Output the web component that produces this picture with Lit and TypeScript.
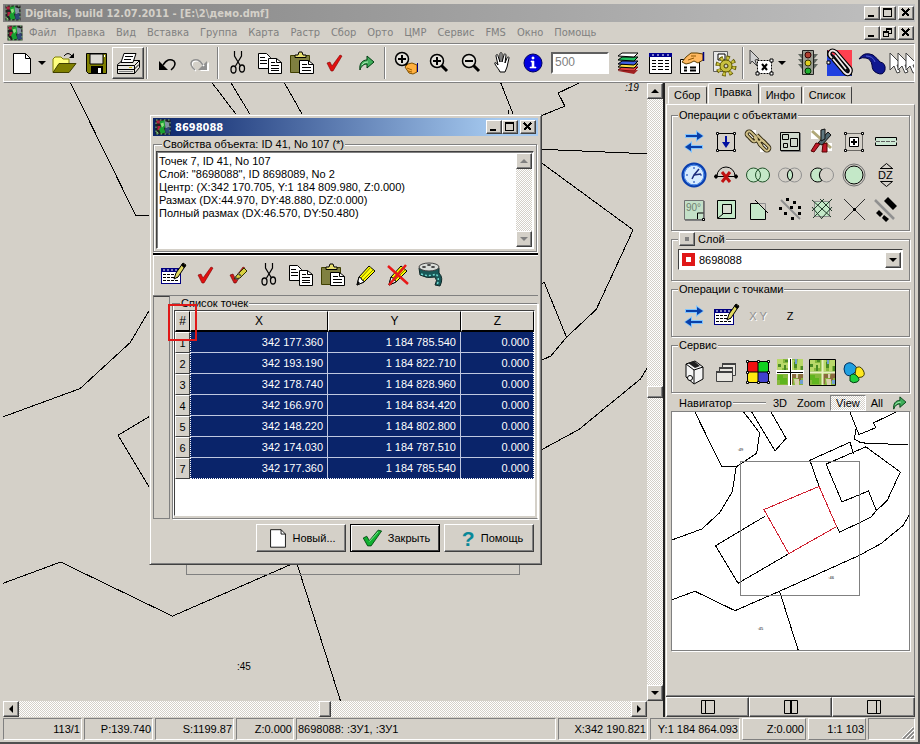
import { LitElement, html, svg, css } from "lit";
import { customElement, property } from "lit/decorators.js";
import { classMap } from "lit/directives/class-map.js";

const check = (fill: string, dark: string) => svg`
  <path d="M9 16l3-1 2 4 8-11 2 1-9 15h-2z" fill=${fill} stroke=${dark} stroke-width=".6"/>`;

const tableGrid = svg`
  <rect x="4.5" y="9.5" width="19" height="15" fill="#fff" stroke="#000080"/>
  <path d="M4 9h20v4H4z" fill="#000080"/>
  <path d="M6 11h2m2 0h2m2 0h2m2 0h2" stroke="#fff"/>
  <path d="M6 15.500h3m1 0h3m1 0h3m1 0h3M6 18.500h3m1 0h3m1 0h3m1 0h3M6 21.500h3m1 0h3m1 0h3m1 0h3" stroke="#000" stroke-width="1"/>`;

const aerial = svg`
  <path d="M3 3h26v26H3z" fill="#86b83c"/>
  <path d="M3 3h6v4h5v5H8v3H3zM17 4h3v11h-3zM24 3h5v7h-3v5h-3v-6z" fill="#b9d86a"/>
  <path d="M4 8h3v3H4zM11 4h3v2h-3zM10 9h2v6h-2zM20 6h3v6h-3zM27 10h2v5h-2z" fill="#4a8a24"/>
  <path d="M4 19h5v3h4v6H6v-4H3z" fill="#5fb51e"/>
  <path d="M17 18h5v4h-3v6h-2zM25 17h4v5h-2v3h-4z" fill="#8a6a3c"/>
  <path d="M20 23h5v6h-4zM22 18h2v4h-2z" fill="#d9cfb0"/>
  <path d="M21 3h2v5h-2zM26 24h3v4h-3z" fill="#6f9fd0"/>`;

const arrows = svg`
  <path d="M7 9h11V5l8 6-8 6v-4H7z" fill="#7fc4ff"/>
  <path d="M25 20H14v-4l-8 6 8 6v-4h11z" fill="#7fc4ff"/>
  <path d="M8 10h11V7l6 4-6 4v-3H8zM24 21H13v-3l-6 4 6 4v-3h11z" fill="#0a3fa8"/>`;

const pencil = svg`
  <path d="M8 26l2-8L20 7l6 5-11 11z" fill="#ffff00" stroke="#000"/>
  <path d="M12 19L22 8M14 21l10-10" stroke="#808000"/>
  <path d="M8 26l2-8 2 1 1 2 2 1v1z" fill="#fff" stroke="#000"/>
  <path d="M8 26l1-4 2 2z" fill="#000"/>`;

const forward = svg`
  <path d="M10 23c-1-6 2-10 7-10V9l7 6-7 6v-4c-3 0-6 2-7 6z" fill="#3fae5a" stroke="#003c10"/>
  <path d="M12 18c1-2 3-3 6-3" stroke="#b8f0c0" fill="none"/>`;

const lens = svg`
  <path d="M20 18l6 6" stroke="#000" stroke-width="3"/>
  <circle cx="16" cy="14" r="6.500" fill="#e4e2dc" stroke="#000" stroke-width="1.500"/>`;

const cursor = (x: number) => svg`
  <path d="M${x} 6v17l4-4 3 7 3-1-3-7h5z" fill="#fff" stroke="#404040"/>`;

const links = (color: string, width: number) => svg`
  <g fill="none" stroke=${color} stroke-width=${width}>
    <rect x="4" y="9" width="12" height="5" rx="2.500" transform="rotate(45 10 11)"/>
    <rect x="16" y="18" width="12" height="5" rx="2.500" transform="rotate(45 22 21)"/>
    <path d="M12 12l8 9M15 10l8 8"/>
  </g>`;

const icons: Record<string, unknown> = {
  logo: svg`
    <path d="M1 1h30v30H1z" fill="#202020"/>
    <path d="M3 3h8v6H3zM5 14h6v8H5z" fill="#b02040"/>
    <path d="M9 5l10-3 4 9-5 8 3 8-9 3-4-9 4-6z" fill="#18a030"/>
    <path d="M19 4l9 3 1 9-8 3z" fill="#8090a0"/>
    <path d="M20 19l9-3 1 12-9 2z" fill="#304878"/>
    <path d="M11 9l6-2 1 6-4 4zM3 24l5 5H3z" fill="#90e080"/>
    <path d="M2 2h28v28H2z" fill="none" stroke="#80c080" stroke-dasharray="3 5" stroke-width="2"/>`,
  page: svg`<path d="M7.500 6.500h12l5 5v15h-17z" fill="#fff" stroke="#000"/><path d="M19.500 6.500v5h5" fill="none" stroke="#000"/>`,
  open: svg`
    <path d="M5 25V12l2-2h6l2 2h6v4" fill="#ffff80" stroke="#808000"/>
    <path d="M5 25.500l6-9h17l-7 9z" fill="#808000" stroke="#404000"/>
    <path d="M16 9q4-5 8 0" fill="none" stroke="#000"/><path d="M26 6v5h-5z" fill="#000"/>`,
  save: svg`
    <path d="M6.500 6.500h20v20h-18l-2-2z" fill="#808000" stroke="#000"/>
    <path d="M10 7h13v10H10z" fill="#dcdad4" stroke="#000"/>
    <path d="M11 19h12v8H11z" fill="#000"/><path d="M18 21h3v5h-3z" fill="#fff"/><path d="M24 8h1v2h-1z" fill="#fff"/>`,
  print: svg`
    <path d="M5.500 17.500l5-4h17v7l-5 6h-17z" fill="#e8e6e0" stroke="#000"/>
    <path d="M12 6.500h12l-3 9H9z" fill="#fff" stroke="#000"/>
    <path d="M13 9.500h8M12 12.500h7M5.500 18.500h17v8M22.500 18.500l5-5M6 22.500h16l5-5" fill="none" stroke="#000"/>
    <path d="M7 24h14v1H7z" fill="#808080"/><path d="M17 20h3v1h-3z" fill="#d0c000"/>`,
  undo: svg`<path d="M8 14v9h9z" fill="#000"/><path d="M12 18q5-8 11-4 3 4-3 9" fill="none" stroke="#000" stroke-width="1.500"/>`,
  redo: svg`
    <path d="M26 15v9h-9z" fill="#fff"/><path d="M24 14v9h-9z" fill="#909090"/>
    <path d="M21 19q-5-8-11-4-3 4 3 9" fill="none" stroke="#fff" stroke-width="1.500"/>
    <path d="M20 18q-5-8-11-4-3 4 3 9" fill="none" stroke="#909090" stroke-width="1.500"/>`,
  cut: svg`
    <path d="M12.500 4v5l6 10M19.500 4v5l-6 10" fill="none" stroke="#000" stroke-width="1.200"/>
    <ellipse cx="11.500" cy="22.500" rx="2.500" ry="3.500" fill="none" stroke="#000" stroke-width="1.300"/>
    <ellipse cx="20" cy="21.500" rx="2.500" ry="3.500" fill="none" stroke="#000" stroke-width="1.300"/>`,
  copy: svg`
    <path d="M4.500 6.500h8l4 4v11h-12z" fill="#fff" stroke="#000"/>
    <path d="M6 10.500h5M6 13.500h7M6 16.500h7" stroke="#000"/>
    <path d="M14.500 11.500h8l5 4v11h-13z" fill="#fff" stroke="#000"/>
    <path d="M22.500 11.500v4h5M17 15.500h4M17 18.500h8M17 21.500h8M17 23.500h8" fill="none" stroke="#000"/>`,
  paste: svg`
    <path d="M4.500 8.500h19v17h-19z" fill="#808040" stroke="#404000"/>
    <path d="M9 10.500V8h3l1-3h3l1 3h3v2.500z" fill="#e8e070" stroke="#000"/>
    <path d="M13.500 13.500h9l5 4v9h-14z" fill="#fff" stroke="#000"/>
    <path d="M22.500 13.500v4h5M16 17.500h5M16 20.500h9M16 23.500h9" fill="none" stroke="#000"/>`,
  check: check("#e01010", "#800000"),
  forward,
  zoomhand: svg`
    <path d="M17 17l4 4" stroke="#000" stroke-width="3"/>
    <circle cx="13" cy="12" r="6.500" fill="#e4e2dc" stroke="#000" stroke-width="1.500"/>
    <path d="M9 12h8M13 8v8" stroke="#000" stroke-width="2"/>
    <path d="M16 20l3-3 4-1 5 2v7l-4 2-4-1z" fill="#ffb040" stroke="#805000"/>
    <path d="M18 21l5 2M19 24l4 1" stroke="#a06000"/><path d="M28.500 16v9" stroke="#000080"/>`,
  zoomin: svg`${lens}<path d="M12 14h8M16 10v8" stroke="#000" stroke-width="2"/>`,
  zoomout: svg`${lens}<path d="M12 14h8" stroke="#000" stroke-width="2"/>`,
  hand: svg`<path d="M15 25c-1-3-3-4-5-8-1-2 1-2 3 1L11 9c0-2 2-2 2 0l2 6V7c0-2 2-2 2 0v8l2-7c0-2 2-1 2 0l-1 8 2-5c1-2 2-1 2 0l-2 9-2 5z" fill="#fff" stroke="#000"/>`,
  info: svg`<circle cx="16" cy="16" r="9" fill="#0000e0" stroke="#000060"/><path d="M14 14h3v6h2v1h-6v-1h2v-5h-1zM15 10h2v2h-2z" fill="#fff" stroke="#fff" stroke-width=".6"/>`,
  layers: svg`
    <path d="M6 23l4-3h16l-4 4z" fill="#e04040" stroke="#600"/><path d="M6 24l16 3 4-4" fill="#a02020"/>
    <path d="M6 20l4-3h16l-4 4z" fill="#ffe040" stroke="#000"/>
    <path d="M6 17l4-3h16l-4 4z" fill="#4060e0" stroke="#000"/>
    <path d="M6 13l4-3h16l-4 4z" fill="#20c060" stroke="#000"/>
    <path d="M6 9l4-3h16l-4 4z" fill="#fff" stroke="#000"/>`,
  table: svg`
    <path d="M5.500 6.500h22v20h-22z" fill="#fff" stroke="#000"/><path d="M5 6h23v4H5z" fill="#000090"/>
    <path d="M8 8h2m3 0h2m3 0h2m3 0h2" stroke="#fff"/>
    <path d="M8 13.500h4m2 0h5m2 0h4M8 16.500h4m2 0h5m2 0h4M8 19.500h4m2 0h5m2 0h4M8 22.500h4m2 0h5m2 0h4" stroke="#000"/>`,
  form: svg`
    <path d="M4.500 12.500h19v14h-19z" fill="#fff" stroke="#000"/>
    <path d="M8 20.500h3m3 0h6M8 23.500h3m3 0h6" stroke="#000" stroke-width="2"/>
    <path d="M6 15l4-5 5-4h6l6 1v6l-5 3-4-2-4 2-4 1z" fill="#ffb860" stroke="#604000"/>
    <path d="M12 13l6-2M15 9h5" stroke="#905800"/><path d="M27.500 5v9" stroke="#000080" stroke-width="1.500"/>`,
  gear: svg`
    <path d="M5.500 4.500h14v20h-14z" fill="#e8e8e8" stroke="#606060"/><path d="M10 7h7v6h-7z" fill="#fff" stroke="#000"/>
    <circle cx="18" cy="19" r="8" fill="none" stroke="#605800" stroke-width="5" stroke-dasharray="3.300 2.980"/>
    <circle cx="18" cy="19" r="8" fill="none" stroke="#c8c040" stroke-width="3" stroke-dasharray="2.300 3.980" stroke-dashoffset="-.5"/>
    <circle cx="18" cy="19" r="6" fill="#c8c040" stroke="#605800"/><circle cx="18" cy="19" r="2" fill="#d4d0c8" stroke="#403800"/>`,
  select: svg`
    <path d="M11.500 13.500h14v13h-14z" fill="#fff" stroke="#000" stroke-dasharray="2 1"/>
    <path d="M10 25h3v3h-3zM24 12h3v3h-3zM24 25h3v3h-3z" fill="#fff" stroke="#000"/>
    <path d="M16 17l5 6M21 17l-5 6" stroke="#000" stroke-width="2"/>
    <path d="M4 3l9 9-4 1 2 6-5-5-2 3z" fill="#d0d0d0" stroke="#404040"/>`,
  lights: svg`
    <path d="M6 7h20l-4 5h4l-4 5h4l-4 5h-12l-4-5h4l-4-5h4z" fill="#606860"/>
    <path d="M10.500 3.500h11v24h-11z" fill="#989c90" stroke="#202020"/>
    <circle cx="16" cy="8" r="3" fill="#b04030" stroke="#300"/><circle cx="16" cy="16" r="3" fill="#e0d020" stroke="#330"/><circle cx="16" cy="24" r="3" fill="#20b030" stroke="#030"/>`,
  clip: svg`
    <path d="M3 3h25v26H3z" fill="#2040e0"/><path d="M3 3h25v20z" fill="#ff4050"/><path d="M3 3l25 20v6L3 9z" fill="#101010"/>
    <path d="M9 12l11 13q4 4 6 1t-1-6L12 5Q8 2 6 5t2 6" fill="none" stroke="#000" stroke-width="4"/>
    <path d="M11 8l11 14" stroke="#000" stroke-width="3"/>
    <path d="M9 12l11 13q4 4 6 1t-1-6L12 5Q8 2 6 5t2 6M11 8l11 14" fill="none" stroke="#f0e8e8" stroke-width="1.800"/>
    <path d="M3 14h3v3H3z" fill="#fff" stroke="#000"/>`,
  blob: svg`<path d="M3 12Q8 4 17 8q5 4 7 7 6 1 5 8-2 6-8 3-5-2-5-8-1-6-6-7-4-1-7 1z" fill="#101890" stroke="#000040"/><path d="M10 9q7 0 9 6" stroke="#5060d0" fill="none"/>`,
  cursors: svg`${cursor(2)}${cursor(10)}${cursor(18)}`,
  edit: svg`${tableGrid}<path d="M17 20l2-6 7-10 3 2-8 12z" fill="#e0d860" stroke="#000"/><path d="M25 5l3 3" stroke="#000" stroke-width="3"/>`,
  checkpen: svg`${check("#d01818", "#600")}<path d="M13 20l3-4 7-7 3 3-7 7z" fill="#d8d040" stroke="#303000"/><path d="M14 18l3 3M17 14l3 3" stroke="#505050" stroke-width="1.500"/>`,
  pencil,
  nopencil: svg`${pencil}<path d="M7 7l20 18M25 6L8 26" stroke="#e81818" stroke-width="2.500"/>`,
  film: svg`
    <path d="M6 9q10 5 20 0v5q5 5 1 13l-5-1q3-5 0-8-8 2-15-2z" fill="#185858" stroke="#102828"/>
    <ellipse cx="16" cy="8" rx="10" ry="4" fill="#d8dcd8" stroke="#404040"/>
    <ellipse cx="11" cy="8" rx="2" ry="1" fill="#404040"/><ellipse cx="20" cy="8" rx="2" ry="1" fill="#404040"/><ellipse cx="16" cy="6" rx="2" ry="1" fill="#404040"/>
    <path d="M8 15q8 3 15 0 4 4 1 11" fill="none" stroke="#70d8d0" stroke-width="1.500" stroke-dasharray="2 2"/>`,
  swap: arrows,
  import: svg`
    <path d="M7.500 8.500h17v17h-17z" fill="none" stroke="#000"/>
    <path d="M6 7h3v3H6zM23 7h3v3h-3zM6 24h3v3H6zM23 24h3v3h-3z" fill="#fff"/>
    <path d="M6.500 7.500h2v2h-2zM23.500 7.500h2v2h-2zM6.500 24.500h2v2h-2zM23.500 24.500h2v2h-2z" fill="#fff" stroke="#000"/>
    <path d="M15 11h2v6h3l-4 6-4-6h3z" fill="#0010a0"/>`,
  chain: svg`<path d="M5 5h9v9H5zM18 18h8v9h-8z" fill="#fff"/>${links("#302810", 4)}${links("#d0c088", 2)}`,
  blocks: svg`
    <path d="M7 8h20v19H7z" fill="#808080"/><path d="M6.500 7.500h19v18h-19z" fill="#cfd8cc" stroke="#000"/>
    <path d="M8.500 9.500h6v5h-6zM16.500 13.500h7v8h-7zM9.500 18.500h4v4h-4z" fill="none" stroke="#000"/>`,
  pliers: svg`
    <path d="M5 5h9v9H5zM18 18h8v8h-8z" fill="#fff"/>
    <path d="M6 6l19 17" stroke="#b0a878" stroke-width="3"/>
    <path d="M12 18l10-11 3 3-9 10z" fill="#506870" stroke="#101010"/><path d="M15 5l4-1v10l-4 2z" fill="#607880" stroke="#101010"/>
    <path d="M5 26l5-8 4 1-6 8zM16 27l1-8 4-1 0 9z" fill="#c01828" stroke="#500"/>`,
  addpoint: svg`
    <path d="M7.500 8.500h17v17h-17z" fill="none" stroke="#000" stroke-dasharray="1 1"/>
    <path d="M6.500 7.500h2v2h-2zM23.500 7.500h2v2h-2zM6.500 24.500h2v2h-2zM23.500 24.500h2v2h-2z" fill="#fff" stroke="#000"/>
    <path d="M11.500 12.500h9v9h-9z" fill="#fff" stroke="#000"/><path d="M13 17h6M16 14v6" stroke="#000" stroke-width="2"/>`,
  strip: svg`<path d="M5.500 12.500h21v8h-21z" fill="#cde8d4"/><path d="M5.500 15.500v-3h21v3M5.500 17.500v3h21v-3" fill="none" stroke="#000"/><path d="M6 16.500h20" stroke="#606060" stroke-dasharray="4 1"/>`,
  clock: svg`<circle cx="16" cy="16" r="11" fill="#d8ecff" stroke="#0a3fb0" stroke-width="3"/><circle cx="16" cy="16" r="10" fill="none" stroke="#5a98f0"/>
    <path d="M16 8v2M16 22v2M8 16h2M22 16h2" stroke="#0a3fb0"/><path d="M14 20l2-4 5-6M16 16l7-1" stroke="#203080" stroke-width="1.500"/>`,
  cutarc: svg`<path d="M7 17a9 9 0 0118 0" fill="none" stroke="#000"/><path d="M4 17.500h24M5 16h2v3H5zM25 16h2v3h-2z" stroke="#000"/><path d="M12 13l8 10M20 13l-8 10" stroke="#c01010" stroke-width="3"/>`,
  union: svg`<circle cx="11.500" cy="16" r="7" fill="#c4e8c8"/><circle cx="20.500" cy="16" r="7" fill="#c4e8c8"/><circle cx="11.500" cy="16" r="7" fill="none" stroke="#205028"/><circle cx="20.500" cy="16" r="7" fill="none" stroke="#205028"/>`,
  intersect: svg`<circle cx="11.500" cy="16" r="7" fill="none" stroke="#909090"/><circle cx="20.500" cy="16" r="7" fill="none" stroke="#909090"/><path d="M16 10.500a7 7 0 010 11 7 7 0 010-11" fill="#c4e8c8" stroke="#000"/>`,
  subtract: svg`<circle cx="20.500" cy="16" r="7" fill="none" stroke="#909090"/><path d="M16 10.500a7 7 0 100 11 7 7 0 010-11" fill="#c4e8c8" stroke="#000"/>`,
  buffer: svg`<circle cx="16" cy="16" r="11" fill="none" stroke="#707070"/><circle cx="16" cy="16" r="9" fill="#c4e8c8" stroke="#000"/>`,
  dz: svg`<path d="M10.500 9.500l6-5 6 5M10.500 22.500l6 5 6-5z" fill="none" stroke="#000"/><path d="M10 9.500h13" stroke="#000"/><text x="8" y="20" font-size="11">DZ</text>`,
  right: svg`<path d="M7 8h20v20H7z" fill="#808080"/><path d="M6.500 7.500h19v19h-19z" fill="#c4e0c8" stroke="#707070"/><path d="M19.500 26v-6h6" fill="none" stroke="#000"/><path d="M24.500 25.500h2v2h-2z" fill="#fff" stroke="#000"/><text x="8" y="18" font-size="10" fill="#708070">90°</text>`,
  inner: svg`<path d="M7.500 7.500h18v18h-18z" fill="#c4e8c8" stroke="#000"/><path d="M12.500 11.500h9v9h-9z" fill="#d8dcd0" stroke="#000"/><path d="M8 25l5-4" stroke="#000"/>`,
  corner: svg`<path d="M8.500 10.500h8l7 7v9h-15z" fill="#c4e8c8" stroke="#000"/><path d="M17 10.500h6.500V17" fill="none" stroke="#909090"/><path d="M13 7l13 13" stroke="#000"/>`,
  scatter: svg`<path d="M7 7l19 19" stroke="#909090" stroke-width="2"/><path d="M12 5h3v3h-3zM19 8h3v3h-3zM24 13h3v3h-3zM5 14h3v3H5zM10 19h3v3h-3zM17 24h3v3h-3zM16 13h3v3h-3zM24 19h3v3h-3z" fill="#000"/>`,
  hatch: svg`<path d="M8.500 8.500h15v15h-15z" fill="#c4e8c8" stroke="#909090"/><path d="M6 14l10 12M6 7l19 17M14 6l12 12M26 6L7 25M26 14L16 25M18 6L6 18" stroke="#203828"/>`,
  cross: svg`<path d="M6 6l21 21M27 6L6 27" stroke="#303030"/><path d="M15 15h3v3h-3z" fill="#000"/>`,
  mirror: svg`<path d="M5 7l19 19" stroke="#909090" stroke-width="2.500"/><path d="M14 8l4-4 9 9-4 4zM6 20l3-3 4 4-3 3zM12 25l2-3 5 4-3 3z" fill="#000"/>`,
  box: svg`<path d="M8 8l9-3 8 6v12l-9 5-8-7z" fill="#f4f4f4" stroke="#000"/><path d="M8 8l8 6 9-3M16 14v13" fill="none" stroke="#000"/><path d="M10 7l7 5 5-2-6-5z" fill="#202020"/><circle cx="12" cy="22" r="2.500" fill="#fff" stroke="#000"/>`,
  windows: svg`<path d="M12.500 7.500h13v12h-13z" fill="#e8e6e0" stroke="#404040"/><path d="M9.500 11.500h13v12h-13z" fill="#e8e6e0" stroke="#404040"/><path d="M6.500 15.500h16v10h-16z" fill="#e8e6e0" stroke="#404040"/><path d="M12 8h14M9 12h14M6 16h17" stroke="#404040" stroke-width="2"/>`,
  colors: svg`<path d="M6 6h10v10H6z" fill="#f01010"/><path d="M16 6h10v10H16z" fill="#10d020"/><path d="M6 16h10v10H6z" fill="#ffe810"/><path d="M16 16h10v10H16z" fill="#4040d0"/>
    <path d="M5.500 5.500h21v21h-21zM16 6v20M6 16h20" fill="none" stroke="#000"/><path d="M4.500 4.500h2v2h-2zM15.500 4.500h2v2h-2zM25.500 4.500h2v2h-2zM4.500 15.500h2v2h-2zM25.500 15.500h2v2h-2zM4.500 25.500h2v2h-2zM15.500 25.500h2v2h-2zM25.500 25.500h2v2h-2z" fill="#fff" stroke="#000"/>`,
  tiles: svg`${aerial}<path d="M16 2v28M2 16h28" stroke="#fff" stroke-width="4"/><path d="M16.500 3v26M3 16.500h26" stroke="#000"/>`,
  tilesframe: svg`${aerial}<path d="M16.500 3v26M3 16.500h26" stroke="#e8f0c0" stroke-width="2"/><path d="M3.500 3.500h26v26h-26z" fill="none" stroke="#000"/>`,
  blobs: svg`<path d="M7 9q4-4 8-1t4 5-5 6q-5 2-7-2t0-8z" fill="#20a0e0" stroke="#003060"/><path d="M18 12q4-3 7 2t-1 7-7-2z" fill="#ffe820" stroke="#404000"/><path d="M12 20q3-4 7 0t0 6-7-1z" fill="#20d040" stroke="#004010"/>`,
  ok: svg`<path d="M6 16l4-2 3 5 10-12 4 1-12 17h-4z" fill="#10b030" stroke="#004810"/><path d="M13 20L23 9" stroke="#90f0a0"/>`,
  help: svg`<text x="10" y="25" font-size="24" font-weight="bold" fill="#088898">?</text>`,
  left: svg`<path d="M9.500 9.500h13v13h-13zM13.500 9.500v13" fill="none" stroke="#000"/>`,
  middle: svg`<path d="M9.500 9.500h13v13h-13z" fill="none" stroke="#000"/><path d="M16 9v14" stroke="#000" stroke-width="2"/>`,
  rightpane: svg`<path d="M9.500 9.500h13v13h-13zM18.500 9.500v13" fill="none" stroke="#000"/>`,
};

const icon = (name: string, cls = "") => html`
  <svg class="icon ${cls}" viewBox="0 0 32 32" aria-hidden="true">${icons[name]}</svg>`;

const base = css`
  :host, * { box-sizing: border-box; }
  .icon { display: block; width: 32px; height: 32px; flex: none; font-family: "Liberation Sans", Arial, sans-serif; }
  .small { width: 16px; height: 16px; }
  button, input, select, textarea { font: inherit; color: inherit; margin: 0; padding: 0; border: 0; border-radius: 0; background: none; outline: 0; }
  .tool { display: flex; align-items: center; justify-content: center; width: 32px; height: 32px; flex: none; }
  .raised { background: #d4d0c8; border: 1px solid; border-color: #fff #404040 #404040 #fff; box-shadow: inset -1px -1px 0 #808080; }
  .checker { background: conic-gradient(#fff 25%, #d4d0c8 0 50%, #fff 0 75%, #d4d0c8 0) 0 0 / 2px 2px; }
  .arrow { display: flex; align-items: center; justify-content: center; width: 16px; height: 16px; flex: none; }
  .arrow::before { content: ""; border: 4px solid transparent; }
  .up::before { border-top: 0; border-bottom-color: currentColor; }
  .down::before { border-bottom: 0; border-top-color: currentColor; }
  .prev::before { border-left: 0; border-right-color: currentColor; }
  .next::before { border-right: 0; border-left-color: currentColor; }
  fieldset { margin: 0; min-width: 0; border: 1px solid #808080; box-shadow: 1px 1px 0 #fff, inset 1px 1px 0 #fff; }
  legend { padding: 0 1px; margin-left: 6px; line-height: 14px; background: #d4d0c8; }
`;

const parcels = svg`
  <g class="plots">
    <path d="M695 411L722 466H736.500L732.500 491 720 512 702 528.500 672 539.500"/>
    <path d="M744 411L760 432 757 452.500 736.500 466"/>
    <path d="M752 411L775.500 450 786.500 437.500 771.500 411"/>
    <path d="M850.700 411L859.700 433.700 876.700 426.700 874.300 422 897 411"/>
    <path d="M856.500 428L855.300 438.500 862 442 909 444"/>
    <path d="M854.300 452.700L850.700 441.300 810.500 459.500 819.700 485.700M837.300 526L840.300 531.700 871.700 516.700 877.300 510 888 500 901.300 471.300 866.700 446 826.700 463.300 842.700 501.300 869.300 490.300 877.300 510"/>
    <path d="M766 515.300L715.700 545.300 738.300 583 789.300 553.300"/>
    <path d="M672 599.500L695 591 735.300 610.500 780 591 860 555 881.700 543.300 904 525 910 515"/>
    <path d="M780 591L799 651"/>
    <path class="red" d="M764.300 509L819.700 485.700 837.300 526 789.300 553.300z"/>
    <path class="view" d="M740.500 460.500h120v135h-120z"/>
  </g>`;

const plotStyles = css`
  .plots path { fill: none; stroke: #000; stroke-width: 1; vector-effect: non-scaling-stroke; shape-rendering: crispEdges; }
  .plots .red { stroke: #d02030; }
  .plots .view { stroke: #808080; }
`;

@customElement("window-buttons")
class WindowButtons extends LitElement {
  @property({ type: Boolean }) restore = false;
  static styles = [base, css`
    :host { display: flex; }
    button { width: 16px; height: 14px; display: flex; }
    .close { margin-left: 2px; }
    svg { width: 14px; height: 12px; display: block; fill: none; stroke: #000; shape-rendering: crispEdges; }
  `];
  render() {
    return html`
      <button class="raised" aria-label="Свернуть"><svg viewBox="0 0 14 12"><path d="M3 9h6" stroke-width="2"/></svg></button>
      <button class="raised" aria-label="Развернуть"><svg viewBox="0 0 14 12">
        ${this.restore
          ? svg`<path d="M5.500 4V1.500h5v5H8M5 2h6M2.500 4.500h5v5h-5zM2 5h6"/>`
          : svg`<path d="M2.500 1.500h8v8h-8zM2 2.500h9"/>`}
      </svg></button>
      <button class="raised close" aria-label="Закрыть"><svg viewBox="0 0 14 12"><path d="M3 2l7 7M10 2l-7 7" stroke-width="2"/></svg></button>`;
  }
}

@customElement("object-dialog")
class ObjectDialog extends LitElement {
  points = [
    ["342 177.360", "1 184 785.540", "0.000"],
    ["342 193.190", "1 184 822.710", "0.000"],
    ["342 178.740", "1 184 828.960", "0.000"],
    ["342 166.970", "1 184 834.420", "0.000"],
    ["342 148.220", "1 184 802.800", "0.000"],
    ["342 174.030", "1 184 787.510", "0.000"],
    ["342 177.360", "1 184 785.540", "0.000"],
  ];
  info = [
    "Точек 7, ID 41, No 107",
    'Слой: "8698088", ID 8698089, No 2',
    "Центр: (X:342 170.705, Y:1 184 809.980, Z:0.000)",
    "Размах (DX:44.970, DY:48.880, DZ:0.000)",
    "Полный размах (DX:46.570, DY:50.480)",
  ].join("\n");
  static styles = [base, css`
    :host { display: block; background: #d4d0c8; padding: 3px; border: 1px solid; border-color: #d4d0c8 #404040 #404040 #d4d0c8; box-shadow: inset 1px 1px 0 #fff, inset -1px -1px 0 #808080; }
    .title { display: flex; align-items: center; gap: 4px; height: 18px; padding: 0 2px; color: #fff; font: bold 11px "DejaVu Sans Condensed", "DejaVu Sans", sans-serif; background: linear-gradient(90deg, #0a246a, #a6caf0 90%); }
    .title span { flex: 1; }
    .props { padding: 0 2px 2px; margin: 1px 1px 1px 0; }
    .memo { display: flex; height: 98px; border: 1px solid; border-color: #404040 #fff #fff #404040; box-shadow: inset 1px 1px 0 #808080; background: #fff; }
    textarea { flex: 1; min-width: 0; resize: none; overflow: hidden; padding: 3px 2px; line-height: 13px; }
    .bar { display: flex; flex-direction: column; justify-content: space-between; margin: 1px; color: #808080; }
    .tools { display: flex; align-items: center; height: 43px; padding: 0 4px; border-top: 2px solid #000; border-bottom: 1px solid #808080; box-shadow: inset 1px 1px 0 #fff; }
    .list { display: flex; gap: 2px; height: 223px; }
    .strip { width: 17px; border: 1px solid #808080; border-top-color: #404040; }
    .points { flex: 1; padding: 0 2px 1px 1px; border-right-color: #fff; }
    .grid { position: relative; height: 206px; background: #fff; border: 1px solid; border-color: #404040 #fff #fff #404040; }
    table { width: 100%; table-layout: fixed; border-collapse: separate; border-spacing: 0; }
    th, td { height: 21px; padding: 0; font-weight: normal; }
    th { background: #d4d0c8; border: 1px solid; border-color: #fff #404040 #404040 #fff; text-align: center; }
    thead th { font-size: 12px; border-bottom: 2px solid #000; border-right-color: #000; }
    td { background: #0a246a; color: #fff; text-align: right; padding-right: 4px; border: solid #c0c8e0; border-width: 0 1px 1px 0; }
    td:last-child { border-right: 1px dotted #fff; }
    td:nth-child(2) { border-left: 1px dotted #fff; }
    tr:last-child td { border-bottom: 1px dotted #fff; }
    .num { width: 15px; } .x { width: 138px; } .y { width: 133px; }
    .mark { position: absolute; left: -7px; top: -7px; width: 29px; height: 37px; border: 2px solid #e01818; pointer-events: none; }
    footer { display: flex; justify-content: flex-end; gap: 4px; padding: 5px 4px 9px; }
    footer button { width: 90px; height: 28px; display: flex; align-items: center; justify-content: center; padding-right: 2px; }
    footer .default { border-color: #000; box-shadow: inset 1px 1px 0 #fff, inset -1px -1px 0 #404040; }
    footer .icon { width: 28px; height: 28px; }
    footer .default .icon { margin-right: 2px; }
  `];
  render() {
    const tools = ["edit", "check", "checkpen", "cut", "copy", "paste", "pencil", "nopencil", "film"];
    return html`
      <div class="title">${icon("logo", "small")}<span>8698088</span><window-buttons></window-buttons></div>
      <fieldset class="props">
        <legend><label for="info">Свойства объекта: ID 41, No 107 (*)</label></legend>
        <div class="memo">
          <textarea id="info" readonly .value=${this.info}></textarea>
          <div class="bar checker"><button class="raised arrow up" aria-label="Вверх"></button><button class="raised arrow down" aria-label="Вниз"></button></div>
        </div>
      </fieldset>
      <div class="tools">${tools.map((t) => html`<button class="tool" aria-label=${t}>${icon(t)}</button>`)}</div>
      <div class="list">
        <div class="strip"></div>
        <fieldset class="points">
          <legend>Список точек</legend>
          <div class="grid">
            <table>
              <colgroup><col class="num"><col class="x"><col class="y"><col></colgroup>
              <thead><tr><th>#</th><th>X</th><th>Y</th><th>Z</th></tr></thead>
              <tbody>${this.points.map((p, i) => html`<tr><th>${i + 1}</th>${p.map((v) => html`<td>${v}</td>`)}</tr>`)}</tbody>
            </table>
            <div class="mark"></div>
          </div>
        </fieldset>
      </div>
      <footer>
        <button class="raised">${icon("page")}Новый...</button>
        <button class="raised default">${icon("ok")}Закрыть</button>
        <button class="raised">${icon("help")}Помощь</button>
      </footer>`;
  }
}

@customElement("side-panel")
class SidePanel extends LitElement {
  static styles = [base, plotStyles, css`
    :host { display: flex; flex-direction: column; }
    .tabs { display: flex; align-items: flex-end; gap: 1px; height: 21px; padding-left: 2px; }
    .tabs button { height: 18px; padding: 0 6px 0 5px; border: 1px solid; border-color: #fff #404040 transparent #fff; border-radius: 2px 2px 0 0; }
    .tabs .active { height: 21px; padding-bottom: 3px; }
    .sheet { flex: 1; display: flex; flex-direction: column; gap: 1px; padding: 3px 4px 8px; border: solid; border-width: 1px; border-color: #fff #808080 #808080 #fff; }
    .tools { display: grid; grid-template-columns: repeat(7, 32px); padding: 4px 6px; }
    .objects .tools { row-gap: 2px; padding: 3px 6px 5px; }
    fieldset { padding: 0; }
    .dim { color: #909090; text-shadow: 1px 1px 0 #fff; }
    .layer legend { display: flex; align-items: center; gap: 3px; line-height: 14px; }
    .pin { width: 16px; height: 14px; display: flex; align-items: center; justify-content: center; }
    .pin::before { content: ""; width: 4px; height: 4px; background: #808080; }
    .combo { display: flex; align-items: center; height: 21px; margin: 3px 6px 10px; padding: 1px; background: #fff; border: 1px solid; border-color: #404040 #fff #fff #404040; }
    .swatch { width: 13px; height: 13px; margin: 0 4px 0 2px; border: 4px solid #e01818; background: #fff; }
    select { flex: 1; min-width: 0; appearance: none; }
    .nav { display: flex; align-items: center; height: 17px; }
    .nav h2 { font: inherit; margin: 0 1px 0 8px; }
    .nav i { flex: 1; height: 2px; background: #808080; border-bottom: 1px solid #fff; margin-right: 2px; }
    .nav button { height: 16px; padding: 0 5px; }
    .nav .on { border: 1px solid; border-color: #808080 #fff #fff #808080; }
    .nav .go { padding: 0; width: 22px; overflow: hidden; display: flex; justify-content: center; }
    .nav .icon { width: 28px; height: 28px; margin-top: -6px; }
    .overview { display: block; width: 100%; aspect-ratio: 238 / 239; background: #fff; border: 1px solid #808080; box-shadow: 1px 1px 0 #fff; font: 4px "Liberation Sans", Arial, sans-serif; }
    .panes { display: grid; grid-template-columns: repeat(3, 1fr); border-top: 1px solid #404040; }
    .panes button { height: 20px; display: flex; align-items: center; justify-content: center; overflow: hidden; }
  `];
  render() {
    const ops = ["swap", "import", "chain", "blocks", "pliers", "addpoint", "strip", "clock", "cutarc", "union", "intersect", "subtract", "buffer", "dz", "right", "inner", "corner", "scatter", "hatch", "cross", "mirror"];
    const tools = (list: string[]) => list.map((t) => html`<button class="tool" aria-label=${t}>${icon(t)}</button>`);
    return html`
      <div class="tabs"><button>Сбор</button><button class="active">Правка</button><button>Инфо</button><button>Список</button></div>
      <div class="sheet">
        <fieldset class="objects"><legend>Операции с объектами</legend><div class="tools">${tools(ops)}</div></fieldset>
        <fieldset class="layer">
          <legend><button class="raised pin" aria-label="Закрепить"></button><label for="layer">Слой</label></legend>
          <div class="combo"><span class="swatch"></span><select id="layer"><option>8698088</option></select><button class="raised arrow down" aria-label="Открыть"></button></div>
        </fieldset>
        <fieldset><legend>Операции с точками</legend><div class="tools">${tools(["swap", "edit"])}<button class="tool dim">X Y</button><button class="tool">Z</button></div></fieldset>
        <fieldset><legend>Сервис</legend><div class="tools">${tools(["box", "windows", "colors", "tiles", "tilesframe", "blobs"])}</div></fieldset>
        <div>
          <div class="nav"><h2>Навигатор</h2><i></i><button>3D</button><button>Zoom</button><button class="on checker">View</button><button>All</button><button class="go" aria-label="Перейти">${icon("forward")}</button></div>
          <svg class="overview" viewBox="672 411 238 239">${parcels}
            <text x="738" y="450">:49</text><text x="829" y="579">:46</text><text x="758" y="630">:45</text></svg>
        </div>
      </div>
      <div class="panes">${["left", "middle", "rightpane"].map((t) => html`<button class="raised" aria-label=${t}>${icon(t)}</button>`)}</div>`;
  }
}

@customElement("app-root")
class AppRoot extends LitElement {
  menu = ["Файл", "Правка", "Вид", "Вставка", "Группа", "Карта", "Растр", "Сбор", "Орто", "ЦМР", "Сервис", "FMS", "Окно", "Помощь"];
  static styles = [base, plotStyles, css`
    :host { display: flex; flex-direction: column; min-height: 100vh; padding: 4px 3px 2px; background: #d4d0c8; color: #000; font: 11px "Liberation Sans", Arial, sans-serif; border-right: 2px solid #505050; border-bottom: 2px solid #505050; overflow: hidden; }
    .title { display: flex; align-items: center; gap: 4px; height: 18px; padding: 0 1px 0 2px; color: #d4d0c8; background: linear-gradient(90deg, #808080, #c0c0c0); font: bold 11px "DejaVu Sans Condensed", "DejaVu Sans", sans-serif; }
    .title span { flex: 1; }
    .menu { display: flex; align-items: center; gap: 11px; height: 21px; padding: 0 1px 0 4px; color: #808080; font: 11px "DejaVu Sans Condensed", "DejaVu Sans", sans-serif; }
    .menu .small { margin-right: -5px; }
    .menu window-buttons { margin-left: auto; }
    .toolbar { display: flex; align-items: center; height: 40px; padding-left: 3px; overflow: hidden; border: 1px solid; border-color: #808080 #fff #808080 #fff; box-shadow: inset 0 1px 0 #fff, inset 0 -1px 0 #fff; }
    .narrow { width: 30px; }
    .drop { width: 10px; height: 32px; margin-right: 1px; flex: none; }
    .sep { width: 2px; height: 32px; margin: 0 3px 0 2px; flex: none; border-left: 1px solid #808080; border-right: 1px solid #fff; }
    .scale { width: 58px; height: 22px; flex: none; margin: 0 3px 0 2px; padding: 0 2px 3px; background: #fff; color: #808080; font-size: 12px; border: 2px solid; border-color: #606060 #fff #fff #606060; }
    .gap { margin-left: 4px; }
    .body { flex: 1; display: flex; gap: 1px; }
    .work { flex: 1; min-width: 0; display: grid; grid-template-columns: minmax(0, 1fr) 16px; grid-template-rows: minmax(0, 1fr) 16px; border-right: 2px solid #202020; }
    .map { position: relative; overflow: hidden; }
    .map > svg { position: absolute; width: 100%; height: 100%; font: 10px "Liberation Sans", Arial, sans-serif; }
    object-dialog { position: absolute; left: 146px; top: 31px; width: 393px; }
    .v, .h { display: flex; justify-content: space-between; }
    .v { flex-direction: column; }
    .thumb { width: 12px; height: 16px; }
    .v .thumb { width: 16px; height: 12px; }
    side-panel { width: 249px; flex: none; }
    .status { display: flex; gap: 2px; padding-top: 1px; height: 23px; }
    .status span { border: 1px solid; border-color: #808080 #fff #fff #808080; padding-right: 1px; text-align: right; line-height: 20px; width: 69px; white-space: nowrap; flex: none; }
    .status .wide { width: 79px; }
    .status .coord { width: 90px; }
    .status .short { width: 58px; }
    .status .height { width: 64px; }
    .status .grip { width: 47px; padding: 0; display: flex; align-items: flex-end; justify-content: flex-end; }
    .grip svg { width: 12px; height: 12px; display: block; }
    .status .message { flex: 1; width: auto; min-width: 0; text-align: left; padding-left: 1px; overflow: hidden; }
    .status .up { border-color: #fff #808080 #808080 #fff; }
  `];
  tool(name: string, extra = "") {
    return html`<button class=${classMap({ tool: true, narrow: extra === "narrow", raised: extra === "raised", gap: extra === "gap" })} aria-label=${name}>${icon(name)}</button>`;
  }
  render() {
    const t = (list: string) => list.split(" ").map((n) => this.tool(n));
    const sep = html`<div class="sep"></div>`;
    const drop = html`<button class="drop arrow down" aria-label="Список"></button>`;
    return html`
      <header class="title">${icon("logo", "small")}<span>Digitals, build 12.07.2011 - [E:\\2\\демо.dmf]</span><window-buttons></window-buttons></header>
      <nav class="menu">${icon("logo", "small")}${this.menu.map((m) => html`<button>${m}</button>`)}<window-buttons restore></window-buttons></nav>
      <div class="toolbar">
        ${this.tool("page", "narrow")}${drop}${t("open save")}${this.tool("print", "raised")}${sep}
        ${t("undo redo")}${sep}${t("cut copy paste check forward")}${sep}${t("zoomhand zoomin zoomout hand")}${this.tool("info")}
        <input class="scale" value="500" aria-label="Масштаб">${t("layers table form gear")}${sep}
        ${this.tool("select", "narrow")}${drop}${this.tool("lights", "gap")}${t("clip blob cursors")}
      </div>
      <main class="body">
        <section class="work">
          <div class="map">
            <svg>
              <g transform="translate(-1871 -1161) scale(2.775)">${parcels}</g>
              <text x="234" y="587">:45</text><text x="622" y="8" font-style="italic">:19</text>
            </svg>
            <object-dialog></object-dialog>
          </div>
          <div class="v checker"><button class="raised arrow up" aria-label="Вверх"></button><div class="thumb raised"></div><button class="raised arrow down" aria-label="Вниз"></button></div>
          <div class="h checker"><button class="raised arrow prev" aria-label="Влево"></button><div class="thumb raised"></div><button class="raised arrow next" aria-label="Вправо"></button></div>
        </section>
        <side-panel></side-panel>
      </main>
      <footer class="status">
        <span class="wide">113/1</span><span>P:139.740</span><span class="wide">S:1199.87</span><span class="short">Z:0.000</span>
        <span class="message">8698088: :ЗУ1, :ЗУ1</span><span class="coord">X:342 190.821</span><span class="coord">Y:1 184 864.093</span>
        <span class="up height">Z:0.000</span><span class="up short">1:1 103</span>
        <span class="grip"><svg viewBox="0 0 12 12"><path d="M1 12L12 1M5 12l7-7M9 12l3-3" stroke="#808080" stroke-width="1.500"/><path d="M0 11L11 0M4 11l8-8M8 11l4-4" stroke="#fff"/></svg></span>
      </footer>`;
  }
}
